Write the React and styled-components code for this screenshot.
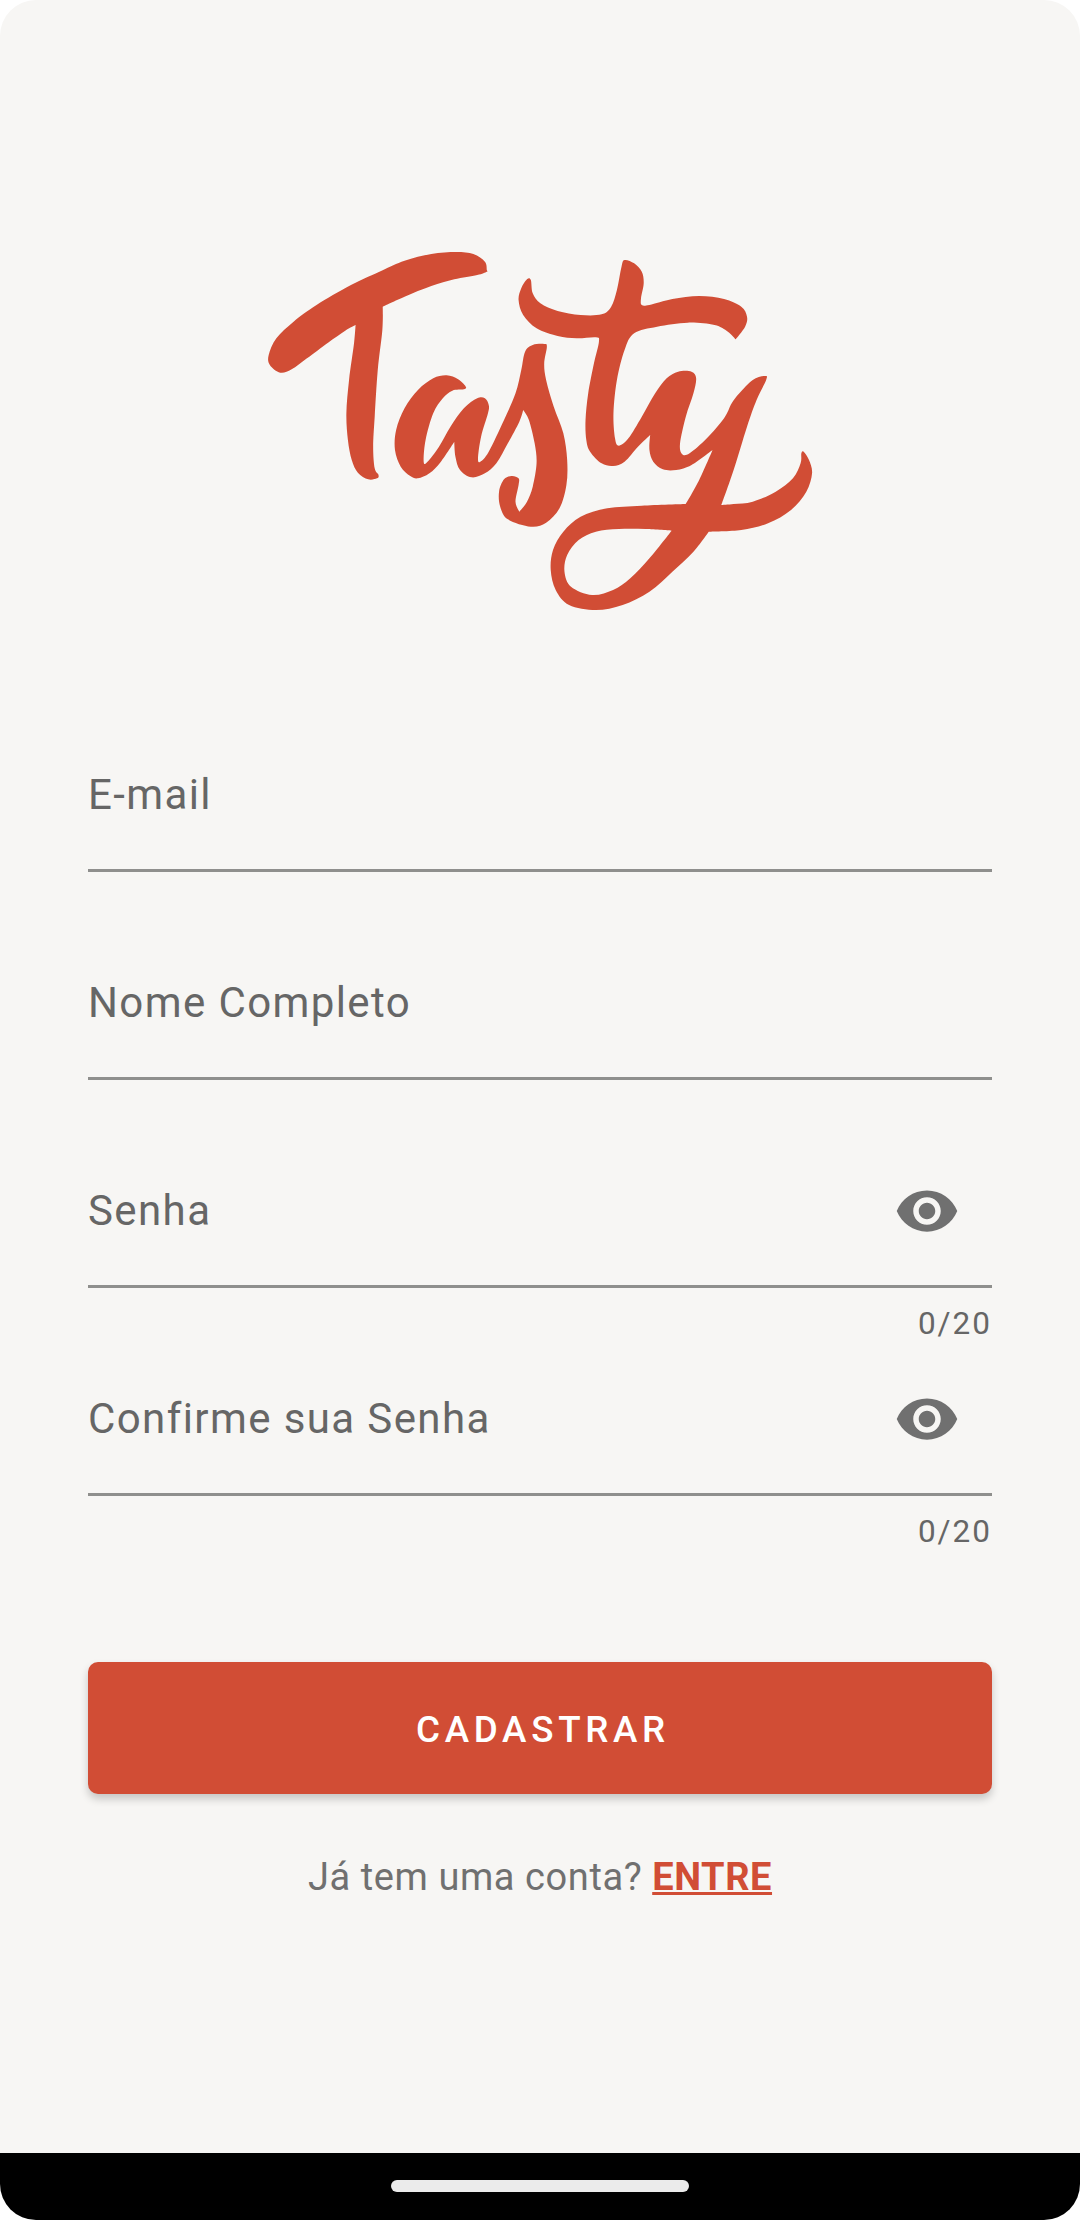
import React from 'react';
import styled, { createGlobalStyle } from 'styled-components';

const GlobalStyle = createGlobalStyle`
  html, body {
    margin: 0;
    padding: 0;
    background: #ffffff;
  }
  * {
    box-sizing: border-box;
  }
`;

const Page = styled.div`
  width: 1080px;
  height: 2220px;
  display: flex;
  flex-direction: column;
  font-family: Roboto, "Liberation Sans", sans-serif;
  overflow: hidden;
`;

const Screen = styled.main`
  flex: 1;
  background: #f7f6f4;
  border-radius: 36px 36px 0 0;
  padding-top: 230px;
  display: flex;
  flex-direction: column;
  align-items: center;
`;

const Logo = styled.svg`
  width: 600px;
  height: 400px;
  flex: none;
`;

const Form = styled.form`
  width: 904px;
  margin-top: 95px;
  display: flex;
  flex-direction: column;
`;

const Field = styled.div`
  height: 208px;
`;

const InputBox = styled.div`
  height: 147px;
  border-bottom: 3px solid #8f8f8d;
  padding: 0 32px 4px 0;
  display: flex;
  align-items: center;
  justify-content: space-between;
`;

const Label = styled.span`
  font-size: 42px;
  line-height: 56px;
  letter-spacing: 1.4px;
  color: #666666;
`;

const EyeIcon = styled.svg`
  width: 66px;
  height: 66px;
  fill: #707070;
  flex: none;
`;

const Counter = styled.div`
  font-size: 31.5px;
  line-height: 40px;
  letter-spacing: 2px;
  color: #666666;
  text-align: right;
  padding-top: 16px;
`;

const SubmitButton = styled.button`
  height: 132px;
  margin-top: 105px;
  border: none;
  border-radius: 10px;
  background: #d14d35;
  color: #ffffff;
  font-family: inherit;
  font-size: 36.75px;
  font-weight: 500;
  letter-spacing: 4.7px;
  padding: 2px 0 0 6px;
  box-shadow: 0 5px 8px rgba(0, 0, 0, 0.2);
`;

const Footer = styled.p`
  margin: 58px 0 0;
  font-size: 38px;
  line-height: 50px;
  letter-spacing: 0.58px;
  color: #707070;
  text-align: center;
`;

const SignIn = styled.a`
  color: #d14d35;
  font-weight: 700;
  text-decoration: underline;
`;

const NavBar = styled.div`
  height: 67px;
  flex: none;
  background: #000000;
  border-radius: 0 0 36px 36px;
  padding-top: 27px;
  display: flex;
  justify-content: center;
  align-items: flex-start;
`;

const HomePill = styled.div`
  width: 298px;
  height: 12px;
  border-radius: 6px;
  background: #ebebeb;
`;

// contornos do logo, tracados em cima da referencia; terceiro valor = canto vivo
const LOGO_T = [[645,120],[640,95],[610,72],[565,66],[500,72],[430,92],[370,122],[290,165],[200,225],[140,275],[95,325],[75,375],[78,405],[105,428],[135,418],[175,385],[230,338],[275,302],[302,285,1],[298,340],[285,450],[278,550],[282,630],[292,690],[308,728],[335,748],[358,745],[362,735],[352,715],[348,650],[352,560],[360,420],[372,300],[373,230,1],[430,200],[500,168],[560,148],[620,135],[645,125]];
const LOGO_AS = [[590,470],[570,448],[540,436],[505,445],[465,480],[430,535],[408,600],[405,660],[420,710],[445,738],[465,745],[495,730],[525,695],[560,635,1],[563,680],[575,720],[605,742],[640,730],[670,700],[700,640],[730,575],[740,540,1],[755,570],[770,640],[775,700],[765,770],[750,815],[730,845,1],[720,815],[728,765],[728,745],[710,738],[690,748],[677,785],[680,830],[700,868],[760,890],[800,878],[835,835],[853,765],[855,690],[845,610],[820,530],[800,450],[795,400],[802,350],[795,342],[765,345],[745,365],[735,420],[720,490],[690,570],[650,665],[628,695],[622,685],[630,620],[648,550],[650,525],[640,505],[620,505],[585,535],[550,590],[520,650],[490,695],[480,695],[485,630],[505,550],[530,505],[555,482],[585,478]];
const LOGO_TY = [[760,150],[750,148],[735,175],[728,210],[740,255],[775,295],[830,318],[880,325],[930,322],[938,335],[925,400],[910,490],[903,570],[905,630],[915,665],[945,700],[975,708],[1005,695],[1040,650],[1072,615,1],[1070,660],[1080,695],[1105,718],[1140,720],[1180,705],[1235,660,1],[1200,750],[1165,822,1],[1050,827],[960,835],[890,860],[845,905],[818,960],[812,1020],[825,1080],[860,1125],[930,1140],[1000,1125],[1070,1085],[1130,1025],[1185,965],[1225,905,1],[1310,900],[1380,880],[1440,840],[1480,785],[1495,730],[1487,690],[1473,665],[1467,670],[1465,700],[1445,745],[1400,785],[1340,815],[1290,822],[1258,825,1],[1290,720],[1325,590],[1350,510],[1375,450],[1372,438],[1340,450],[1305,490],[1285,520],[1265,565],[1220,625],[1175,670],[1155,672],[1150,640],[1165,560],[1185,490],[1192,445],[1180,425],[1145,425],[1115,445],[1085,490],[1050,560],[1015,625],[990,647],[980,625],[976,550],[985,450],[1005,360],[1030,310],[1090,290],[1170,278],[1240,285],[1275,305],[1295,328,1],[1320,290],[1325,260],[1310,230],[1265,207],[1200,198],[1130,207],[1070,225],[1050,225],[1048,205],[1055,160],[1050,125],[1030,100],[1005,90],[997,110],[985,180],[970,230],[945,253],[890,255],[830,243],[785,220],[765,190]];
const LOGO_LOOP = [[1128,902,1],[1060,897],[990,897],[930,905],[885,930],[855,975],[848,1025],[865,1070],[920,1095],[975,1080],[1020,1045],[1070,985]];

// fecha os pontos numa curva suave (catmull-rom)
function smooth(points) {
  const n = points.length;
  let d = `M${points[0][0]} ${points[0][1]}`;
  for (let i = 0; i < n; i++) {
    const p0 = points[(i - 1 + n) % n];
    const p1 = points[i];
    const p2 = points[(i + 1) % n];
    const p3 = points[(i + 2) % n];
    const k1 = p1[2] ? 0 : 1 / 6;
    const k2 = p2[2] ? 0 : 1 / 6;
    const c1 = [p1[0] + (p2[0] - p0[0]) * k1, p1[1] + (p2[1] - p0[1]) * k1];
    const c2 = [p2[0] - (p3[0] - p1[0]) * k2, p2[1] - (p3[1] - p1[1]) * k2];
    d += `C${c1[0]} ${c1[1]} ${c2[0]} ${c2[1]} ${p2[0]} ${p2[1]}`;
  }
  return d + 'Z';
}

const logoPath = [LOGO_T, LOGO_AS, LOGO_TY, LOGO_LOOP].map(smooth).join('');

const fields = [
  { label: 'E-mail' },
  { label: 'Nome Completo' },
  { label: 'Senha', secret: true },
  { label: 'Confirme sua Senha', secret: true },
];

function Eye() {
  return (
    <EyeIcon viewBox="0 0 24 24">
      <path d="M12 4.5C7 4.5 2.73 7.61 1 12c1.73 4.39 6 7.5 11 7.5s9.27-3.11 11-7.5c-1.73-4.39-6-7.5-11-7.5zM12 17c-2.76 0-5-2.24-5-5s2.24-5 5-5 5 2.24 5 5-2.24 5-5 5zm0-8c-1.66 0-3 1.34-3 3s1.34 3 3 3 3-1.34 3-3-1.34-3-3-3z" />
    </EyeIcon>
  );
}

export default function App() {
  return (
    <Page>
      <GlobalStyle />
      <Screen>
        <Logo viewBox="0 0 1568 1200" preserveAspectRatio="none">
          <path d={logoPath} fill="#d14d35" fillRule="evenodd" />
        </Logo>
        <Form>
          {fields.map((field) => (
            <Field key={field.label}>
              <InputBox>
                <Label>{field.label}</Label>
                {field.secret && <Eye />}
              </InputBox>
              {field.secret && <Counter>0/20</Counter>}
            </Field>
          ))}
          <SubmitButton type="button">CADASTRAR</SubmitButton>
          <Footer>
            Já tem uma conta? <SignIn>ENTRE</SignIn>
          </Footer>
        </Form>
      </Screen>
      <NavBar>
        <HomePill />
      </NavBar>
    </Page>
  );
}
